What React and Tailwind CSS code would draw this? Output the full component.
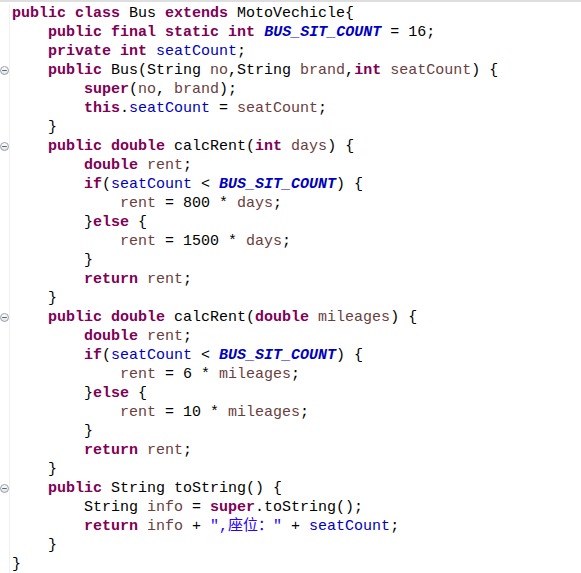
import React from "react";

const K = "text-[#7f0055] font-bold";
const F = "text-[#0000c0]";
const C = "text-[#0000c0] font-bold italic";
const V = "text-[#6a3e3e]";
const S = "text-[#2a00ff]";

const k = (t) => [t, K];
const f = (t) => [t, F];
const c = (t) => [t, C];
const v = (t) => [t, V];
const s = (t) => [t, S];

const lines = [
  { seg: [k("public"), " ", k("class"), " Bus ", k("extends"), " MotoVechicle{"] },
  { seg: ["    ", k("public"), " ", k("final"), " ", k("static"), " ", k("int"), " ", c("BUS_SIT_COUNT"), " = 16;"] },
  { seg: ["    ", k("private"), " ", k("int"), " ", f("seatCount"), ";"] },
  { fold: true, seg: ["    ", k("public"), " Bus(String ", v("no"), ",String ", v("brand"), ",", k("int"), " ", v("seatCount"), ") {"] },
  { seg: ["        ", k("super"), "(", v("no"), ", ", v("brand"), ");"] },
  { seg: ["        ", k("this"), ".", f("seatCount"), " = ", v("seatCount"), ";"] },
  { seg: ["    }"] },
  { fold: true, seg: ["    ", k("public"), " ", k("double"), " calcRent(", k("int"), " ", v("days"), ") {"] },
  { seg: ["        ", k("double"), " ", v("rent"), ";"] },
  { seg: ["        ", k("if"), "(", f("seatCount"), " < ", c("BUS_SIT_COUNT"), ") {"] },
  { seg: ["            ", v("rent"), " = 800 * ", v("days"), ";"] },
  { seg: ["        }", k("else"), " {"] },
  { seg: ["            ", v("rent"), " = 1500 * ", v("days"), ";"] },
  { seg: ["        }"] },
  { seg: ["        ", k("return"), " ", v("rent"), ";"] },
  { seg: ["    }"] },
  { fold: true, seg: ["    ", k("public"), " ", k("double"), " calcRent(", k("double"), " ", v("mileages"), ") {"] },
  { seg: ["        ", k("double"), " ", v("rent"), ";"] },
  { seg: ["        ", k("if"), "(", f("seatCount"), " < ", c("BUS_SIT_COUNT"), ") {"] },
  { seg: ["            ", v("rent"), " = 6 * ", v("mileages"), ";"] },
  { seg: ["        }", k("else"), " {"] },
  { seg: ["            ", v("rent"), " = 10 * ", v("mileages"), ";"] },
  { seg: ["        }"] },
  { seg: ["        ", k("return"), " ", v("rent"), ";"] },
  { seg: ["    }"] },
  { fold: true, seg: ["    ", k("public"), " String toString() {"] },
  { seg: ["        String ", v("info"), " = ", k("super"), ".toString();"] },
  { seg: ["        ", k("return"), " ", v("info"), " + ", s("\",座位：\""), " + ", f("seatCount"), ";"] },
  { seg: ["    }"] },
  { seg: ["}"] },
];

function FoldIcon() {
  return (
    <svg width="9" height="9" viewBox="0 0 9 9">
      <defs>
        <linearGradient id="fg" x1="0" y1="0" x2="0" y2="1">
          <stop offset="0" stopColor="#ffffff" />
          <stop offset="1" stopColor="#dfe3e8" />
        </linearGradient>
      </defs>
      <circle cx="4.5" cy="4.5" r="4" fill="url(#fg)" stroke="#9aa0a8" strokeWidth="1" />
      <line x1="2.2" y1="4.5" x2="6.8" y2="4.5" stroke="#5f6670" strokeWidth="1" />
    </svg>
  );
}

export default function App() {
  return (
    <div
      className="w-[581px] h-[573px] bg-white overflow-hidden flex flex-col border-t-2 border-[#dedede] text-black text-[15px] leading-[19px]"
      style={{ fontFamily: '"Liberation Mono", "Noto Sans CJK SC", monospace' }}
    >
      <div className="flex-1 flex pt-[2px]">
        <div className="w-[10px] border-r border-[#f0f0f0] flex flex-col">
          {lines.map((l, i) => (
            <div key={i} className="h-[19px] flex items-center">
              {l.fold ? <FoldIcon /> : null}
            </div>
          ))}
        </div>
        <div className="flex-1 pl-[2px] flex flex-col">
          {lines.map((l, i) => (
            <div key={i} className="h-[19px] whitespace-pre">
              {l.seg.map((sg, j) =>
                typeof sg === "string" ? (
                  <span key={j}>{sg}</span>
                ) : (
                  <span key={j} className={sg[1]}>
                    {sg[0]}
                  </span>
                )
              )}
            </div>
          ))}
        </div>
      </div>
      <div className="h-[2px] ml-[10px] bg-[#e8f1fc]" />
    </div>
  );
}
